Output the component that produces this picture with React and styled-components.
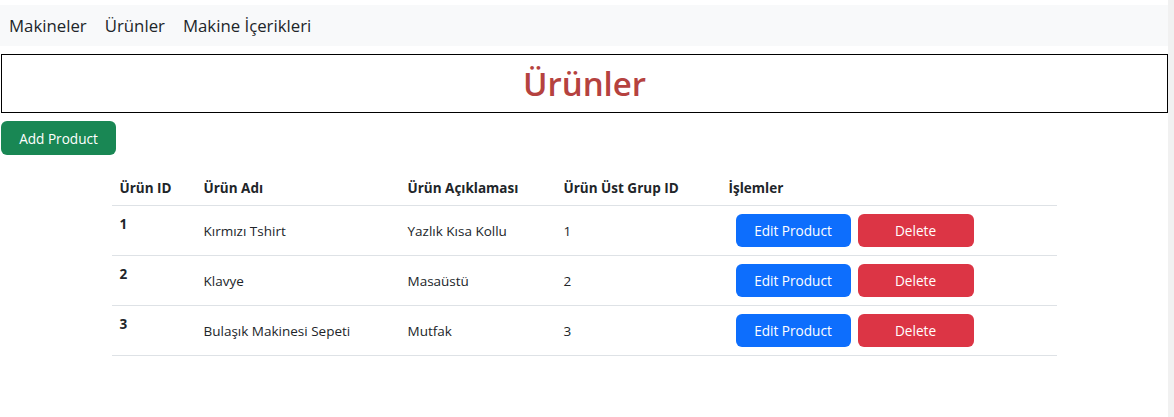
import React from 'react';
import styled, { createGlobalStyle } from 'styled-components';

const GlobalStyle = createGlobalStyle`
  html, body {
    margin: 0;
    padding: 0;
    background: #fff;
  }
  body {
    font-family: "Open Sans", "Noto Sans", sans-serif;
    color: #212529;
  }
`;

const Page = styled.div`
  display: flex;
  min-height: 417px;
`;

const Main = styled.div`
  flex: 1;
  padding-top: 5px;
`;

const ScrollStrip = styled.div`
  width: 6px;
  background: #f1f1f1;
`;

const NavBar = styled.nav`
  height: 41px;
  background: #f8f9fa;
  display: flex;
  align-items: center;
  gap: 18px;
  padding-left: 9px;
`;

const NavLink = styled.a`
  font-size: 16.8px;
  color: #212529;
  text-decoration: none;
  cursor: pointer;
`;

const TitleBox = styled.div`
  margin: 8px 0 0 1px;
  height: 57px;
  border: 1px solid #000;
  display: flex;
  align-items: center;
  justify-content: center;
`;

const Title = styled.h1`
  margin: 0;
  font-size: 33px;
  font-weight: 600;
  color: #b5423f;
`;

const Button = styled.button`
  height: ${p => p.$height || 33}px;
  width: ${p => p.$width || 115}px;
  border: none;
  border-radius: 6px;
  color: #fff;
  font-family: inherit;
  font-size: 13.6px;
  background: ${p => p.$bg};
  cursor: pointer;
`;

const AddRow = styled.div`
  margin: 8px 0 0 1px;
`;

const Table = styled.table`
  width: 945px;
  margin: 15px auto 0;
  border-collapse: collapse;
  table-layout: fixed;
  font-size: 13.5px;
`;

const HeadCell = styled.th`
  text-align: left;
  font-weight: 700;
  padding: 8px;
  height: 19px;
  border-bottom: 1px solid #dee2e6;
`;

const RowHead = styled.th`
  text-align: left;
  vertical-align: top;
  font-weight: 700;
  padding: 8px;
  line-height: 21px;
  border-bottom: 1px solid #dee2e6;
`;

const Cell = styled.td`
  vertical-align: middle;
  padding: 8px;
  height: 33px;
  border-bottom: 1px solid #dee2e6;
`;

const Actions = styled.div`
  display: flex;
  gap: 7px;
  padding-left: 7px;
`;

const products = [
  { id: 1, name: 'Kırmızı Tshirt', desc: 'Yazlık Kısa Kollu', group: 1 },
  { id: 2, name: 'Klavye', desc: 'Masaüstü', group: 2 },
  { id: 3, name: 'Bulaşık Makinesi Sepeti', desc: 'Mutfak', group: 3 },
];

export default function App() {
  return (
    <>
      <GlobalStyle />
      <Page>
        <Main>
          <NavBar>
            <NavLink>Makineler</NavLink>
            <NavLink>Ürünler</NavLink>
            <NavLink>Makine İçerikleri</NavLink>
          </NavBar>
          <TitleBox>
            <Title>Ürünler</Title>
          </TitleBox>
          <AddRow>
            <Button $bg="#198754" $height={34}>Add Product</Button>
          </AddRow>
          <Table>
            <colgroup>
              <col style={{ width: 84 }} />
              <col style={{ width: 204 }} />
              <col style={{ width: 156 }} />
              <col style={{ width: 165 }} />
              <col />
            </colgroup>
            <thead>
              <tr>
                <HeadCell>Ürün ID</HeadCell>
                <HeadCell>Ürün Adı</HeadCell>
                <HeadCell>Ürün Açıklaması</HeadCell>
                <HeadCell>Ürün Üst Grup ID</HeadCell>
                <HeadCell>İşlemler</HeadCell>
              </tr>
            </thead>
            <tbody>
              {products.map(p => (
                <tr key={p.id}>
                  <RowHead>{p.id}</RowHead>
                  <Cell>{p.name}</Cell>
                  <Cell>{p.desc}</Cell>
                  <Cell>{p.group}</Cell>
                  <Cell>
                    <Actions>
                      <Button $bg="#0d6efd">Edit Product</Button>
                      <Button $bg="#dc3545" $width={116}>Delete</Button>
                    </Actions>
                  </Cell>
                </tr>
              ))}
            </tbody>
          </Table>
        </Main>
        <ScrollStrip />
      </Page>
    </>
  );
}
